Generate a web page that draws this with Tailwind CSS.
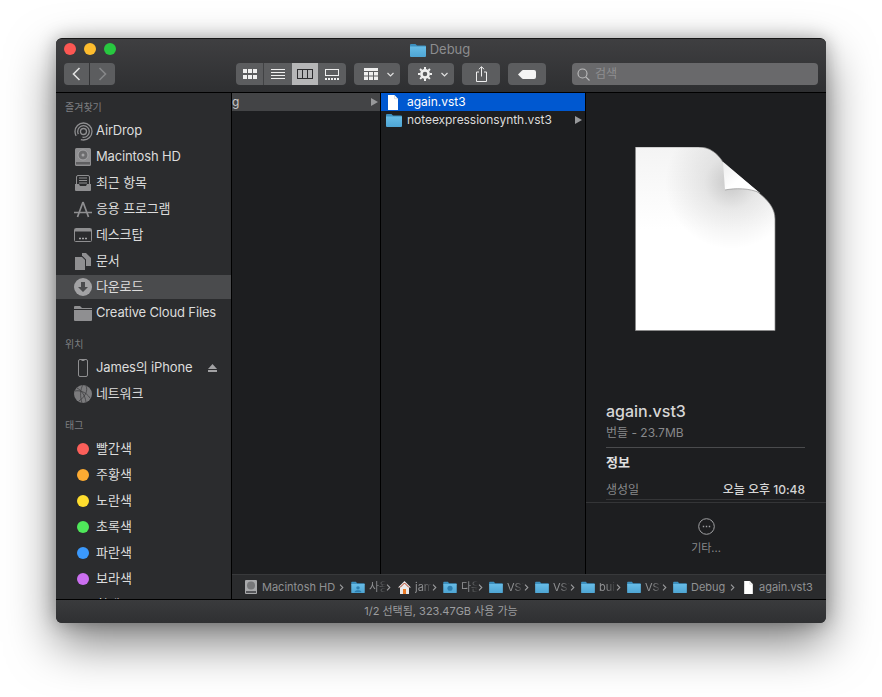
<!DOCTYPE html>
<html lang="ko">
  <head>
    <meta charset="UTF-8" />
    <title>Debug</title>
    <script src="https://cdn.jsdelivr.net/npm/@tailwindcss/browser@4"></script>
  </head>
  <body class="w-[882px] h-[697px] overflow-hidden bg-white font-['Inter','Noto_Sans_CJK_KR',sans-serif]">
    <!-- shared icons -->
    <svg class="absolute w-0 h-0">
      <defs>
        <linearGradient id="folderBody" x1="0" y1="0" x2="0" y2="1">
          <stop offset="0" stop-color="#67bce6" />
          <stop offset="1" stop-color="#4ea5d4" />
        </linearGradient>
        <linearGradient id="docShade" x1="0" y1="0" x2="0" y2="1">
          <stop offset="0" stop-color="#f4f4f4" />
          <stop offset="0.45" stop-color="#ffffff" />
        </linearGradient>
        <radialGradient id="foldShadow" gradientUnits="userSpaceOnUse" cx="96" cy="36" r="66">
          <stop offset="0" stop-color="#000000" stop-opacity="0.2" />
          <stop offset="0.4" stop-color="#000000" stop-opacity="0.08" />
          <stop offset="1" stop-color="#000000" stop-opacity="0" />
        </radialGradient>
        <linearGradient id="foldFace" x1="0" y1="0" x2="1" y2="1">
          <stop offset="0" stop-color="#ececec" />
          <stop offset="0.5" stop-color="#ffffff" />
        </linearGradient>
      </defs>
      <symbol id="folder" viewBox="0 0 16 14">
        <path d="M0 2a1 1 0 0 1 1-1h4.500l1.500 1.500h8a1 1 0 0 1 1 1V4H0z" fill="#3c8fbe" />
        <path d="M0 3.500h16V13a1 1 0 0 1-1 1H1a1 1 0 0 1-1-1z" fill="url(#folderBody)" />
      </symbol>
      <symbol id="doc" viewBox="0 0 12 15">
        <path d="M1 0h6.500L11 3.700V15H1z" fill="#fff" />
        <path d="M7.500 0v3.700H11" fill="none" stroke="#c9c9c9" stroke-width="0.600" />
      </symbol>
      <symbol id="chev" viewBox="0 0 6 10">
        <path d="M1.200 1.500 4.600 5 1.200 8.500" fill="none" stroke="#9a9b9d" stroke-width="1.300" />
      </symbol>
    </svg>

    <div class="ml-[56px] mt-[38px] w-[770px] h-[585px] rounded-[6px] overflow-hidden flex flex-col bg-[#2b2c2e] border-t border-[#161616] shadow-[0_20px_48px_rgba(0,0,0,0.5),0_0_18px_rgba(0,0,0,0.28)] text-[13px] text-[#dcdcdc]">
      <!-- title bar + toolbar -->
      <header class="h-[54px] shrink-0 bg-gradient-to-b from-[#3f3f41] to-[#2e2f31] border-b border-black">
        <div class="relative h-[23px]">
          <div class="flex gap-2 absolute left-2 top-[4px]">
            <span class="w-3 h-3 rounded-full bg-[#fc5753]"></span>
            <span class="w-3 h-3 rounded-full bg-[#fdbc2e]"></span>
            <span class="w-3 h-3 rounded-full bg-[#28c840]"></span>
          </div>
          <div class="flex items-center justify-center gap-[4px] h-full pr-[2px] pb-[2px] text-[#8c8d8f]">
            <svg class="w-4 h-[14px]"><use href="#folder" /></svg>
            <span>Debug</span>
          </div>
        </div>
        <div class="flex items-center h-[22px] mt-px pl-2">
          <button class="w-[25px] h-[22px] rounded-l-[4px] bg-[#5c5d5f] flex items-center justify-center">
            <svg width="9" height="14" viewBox="0 0 9 14"><path d="M7.500 1 1.500 7l6 6" fill="none" stroke="#e2e2e2" stroke-width="1.600" /></svg>
          </button>
          <button class="w-[25px] h-[22px] ml-px rounded-r-[4px] bg-[#5c5d5f] flex items-center justify-center">
            <svg width="9" height="14" viewBox="0 0 9 14"><path d="M1.500 1l6 6-6 6" fill="none" stroke="#868789" stroke-width="1.600" /></svg>
          </button>

          <div class="flex ml-[121px] rounded-[4px] overflow-hidden h-[22px] w-[110px] bg-[#5c5d5f]">
            <div class="w-[28px] flex items-center justify-center border-r border-[#414244]">
              <svg width="14" height="10" viewBox="0 0 14 10" fill="#f0f0f0"><rect width="4" height="4" /><rect x="5" width="4" height="4" /><rect x="10" width="4" height="4" /><rect y="6" width="4" height="4" /><rect x="5" y="6" width="4" height="4" /><rect x="10" y="6" width="4" height="4" /></svg>
            </div>
            <div class="w-[28px] flex items-center justify-center">
              <svg width="14" height="10" viewBox="0 0 14 10" fill="#f0f0f0"><rect width="14" height="1" /><rect y="3" width="14" height="1" /><rect y="6" width="14" height="1" /><rect y="9" width="14" height="1" /></svg>
            </div>
            <div class="w-[26px] flex items-center justify-center bg-[#b6b6b7]">
              <svg width="16" height="10" viewBox="0 0 16 10" fill="none" stroke="#2c2c2e"><rect x="0.500" y="0.500" width="15" height="9" /><path d="M5.500 0v10M10.500 0v10" /></svg>
            </div>
            <div class="w-[28px] flex items-center justify-center">
              <svg width="14" height="11" viewBox="0 0 14 11" fill="#f0f0f0"><path d="M0 0h14v7H0zm1 1v5h12V1z" /><rect x="1" y="1" width="12" height="5" fill="#5c5d5f" /><rect y="9" width="2" height="2" /><rect x="3" y="9" width="2" height="2" /><rect x="6" y="9" width="2" height="2" /><rect x="9" y="9" width="2" height="2" /><rect x="12" y="9" width="2" height="2" /></svg>
            </div>
          </div>

          <button class="w-[46px] h-[22px] ml-2 rounded-[4px] bg-[#5c5d5f] flex items-center pl-[10px] gap-[9px]">
            <svg width="14" height="12" viewBox="0 0 14 12" fill="#efefef"><rect width="14" height="3" /><rect y="4" width="4" height="3.500" /><rect x="5" y="4" width="4" height="3.500" /><rect x="10" y="4" width="4" height="3.500" /><rect y="8.500" width="4" height="3.500" /><rect x="5" y="8.500" width="4" height="3.500" /><rect x="10" y="8.500" width="4" height="3.500" /></svg>
            <svg width="7" height="5" viewBox="0 0 7 5"><path d="M.5 1l3 3 3-3" fill="none" stroke="#e0e0e0" stroke-width="1.200" /></svg>
          </button>
          <button class="w-[46px] h-[22px] ml-2 rounded-[4px] bg-[#5c5d5f] flex items-center pl-[10px] gap-[9px]">
            <svg width="14" height="14" viewBox="0 0 14 14"><circle cx="7" cy="7" r="3.600" fill="none" stroke="#efefef" stroke-width="2.600" /><path d="M7 0v14M0 7h14M2 2l10 10M12 2 2 12" stroke="#efefef" stroke-width="2" stroke-dasharray="2.400 9.200 2.400" /></svg>
            <svg width="7" height="5" viewBox="0 0 7 5"><path d="M.5 1l3 3 3-3" fill="none" stroke="#e0e0e0" stroke-width="1.200" /></svg>
          </button>
          <button class="w-[38px] h-[22px] ml-2 rounded-[4px] bg-[#5c5d5f] flex items-center justify-center">
            <svg width="11" height="16" viewBox="0 0 11 16" fill="none" stroke="#efefef"><path d="M3 6H.5v9.500h10V6H8" /><path d="M5.500 10.500V1M2.800 3.300 5.500.7l2.700 2.600" /></svg>
          </button>
          <button class="w-[38px] h-[22px] ml-2 rounded-[4px] bg-[#5c5d5f] flex items-center justify-center">
            <svg width="18" height="9" viewBox="0 0 18 9"><path d="M0 4.500 4 .5a1.500 1.500 0 0 1 1-.5h11a2 2 0 0 1 2 2v5a2 2 0 0 1-2 2H5a1.500 1.500 0 0 1-1-.5z" fill="#f4f4f4" /></svg>
          </button>

          <div class="flex items-center gap-[5px] ml-[26px] w-[246px] h-[22px] rounded-[4px] bg-[#69696b] pl-[5px]">
            <svg width="13" height="13" viewBox="0 0 13 13" fill="none" stroke="#bdbdbe" stroke-width="1.100"><circle cx="5.500" cy="5.500" r="4.500" /><path d="M8.800 8.800 12.500 12.500" /></svg>
            <span class="text-[#8f8f91] text-[12px]">검색</span>
          </div>
        </div>
      </header>

      <!-- body -->
      <div class="flex flex-1 min-h-0">
        <!-- sidebar -->
        <aside class="w-[176px] shrink-0 overflow-hidden bg-[#2b2c2e] border-r border-black">
          <h3 class="h-[25px] pl-[9px] pt-[9px] text-[10px] leading-[11px] text-[#7e7f81]">즐겨찾기</h3>
          <ul class="tracking-[-0.15px]">
            <li class="h-[26px] flex items-center">
              <span class="w-[40px] flex justify-center pl-[14px]">
                <svg width="19" height="19" viewBox="0 0 19 19" fill="none" stroke="#8f8f91" stroke-width="1.300"><circle cx="9.500" cy="9.500" r="8.500" stroke-dasharray="38 6" stroke-dashoffset="-22" /><circle cx="9.500" cy="9.500" r="5.800" stroke-dasharray="26 5" stroke-dashoffset="-15" /><circle cx="9.500" cy="9.500" r="3" /></svg>
              </span>AirDrop
            </li>
            <li class="h-[26px] flex items-center">
              <span class="w-[40px] flex justify-center pl-[14px]">
                <svg width="16" height="18" viewBox="0 0 16 18"><rect width="16" height="18" rx="1.500" fill="#8f8f91" /><circle cx="8" cy="7" r="5" fill="#6d6d6f" stroke="#a5a5a7" /><circle cx="8" cy="7" r="1.500" fill="#a5a5a7" /><rect x="1" y="14" width="14" height="2.500" fill="#5f5f61" /></svg>
              </span>Macintosh HD
            </li>
            <li class="h-[26px] flex items-center">
              <span class="w-[40px] flex justify-center pl-[14px]">
                <svg width="16" height="16" viewBox="0 0 16 16"><rect x="1.500" y="0.500" width="13" height="11" rx="1.500" fill="#2b2c2e" stroke="#8f8f91" /><path d="M4 3h8M4 5.500h8M4 8h8" stroke="#8f8f91" /><path d="M0 9h4l1 2h6l1-2h4v6a1 1 0 0 1-1 1H1a1 1 0 0 1-1-1z" fill="#8f8f91" /></svg>
              </span>최근 항목
            </li>
            <li class="h-[26px] flex items-center">
              <span class="w-[40px] flex justify-center pl-[14px]">
                <svg width="18" height="17" viewBox="0 0 18 17" fill="none" stroke="#8f8f91" stroke-width="1.700"><path d="M9 1 3.500 16M9 1l5.500 15M0 11.500h18" /></svg>
              </span>응용 프로그램
            </li>
            <li class="h-[26px] flex items-center">
              <span class="w-[40px] flex justify-center pl-[14px]">
                <svg width="18" height="14" viewBox="0 0 18 14"><rect x="0.500" y="0.500" width="17" height="13" rx="1" fill="#2b2c2e" stroke="#8f8f91" /><rect x="1" y="1" width="16" height="2.500" fill="#8f8f91" /><path d="M5 10.500h2M8 10.500h2M11 10.500h2" stroke="#a5a5a7" stroke-width="1.500" /></svg>
              </span>데스크탑
            </li>
            <li class="h-[26px] flex items-center">
              <span class="w-[40px] flex justify-center pl-[14px]">
                <svg width="16" height="17" viewBox="0 0 16 17" fill="#8f8f91"><path d="M0 4h7l3 3v10H0z" /><path d="M7 0h4l5 5v8h-5V6.500L7.500 3H7z" /></svg>
              </span>문서
            </li>
            <li class="h-[24px] my-px flex items-center bg-[#4a4b4d]">
              <span class="w-[40px] flex justify-center pl-[14px]">
                <svg width="18" height="18" viewBox="0 0 18 18"><circle cx="9" cy="9" r="9" fill="#a2a2a4" /><path d="M7 4h4v5h3l-5 5-5-5h3z" fill="#4a4b4d" /></svg>
              </span>다운로드
            </li>
            <li class="h-[26px] flex items-center">
              <span class="w-[40px] flex justify-center pl-[14px]">
                <svg width="18" height="15" viewBox="0 0 18 15" fill="#8f8f91"><path d="M0 1a1 1 0 0 1 1-1h5l2 2h10v1H0z" /><path d="M0 4h18v10a1 1 0 0 1-1 1H1a1 1 0 0 1-1-1z" /></svg>
              </span>Creative Cloud Files
            </li>
          </ul>

          <h3 class="h-[29px] pl-[9px] pt-[13px] text-[10px] leading-[11px] text-[#7e7f81]">위치</h3>
          <ul class="tracking-[-0.15px]">
            <li class="h-[26px] flex items-center">
              <span class="w-[40px] flex justify-center pl-[14px]">
                <svg width="10" height="18" viewBox="0 0 10 18"><rect x="0.500" y="0.500" width="9" height="17" rx="1.500" fill="none" stroke="#8f8f91" /><path d="M3.500 1.500h3" stroke="#8f8f91" /></svg>
              </span>James의 iPhone
              <svg class="ml-auto mr-[14px]" width="9" height="8" viewBox="0 0 9 8" fill="#a2a2a4"><path d="M4.500 0 9 5H0z" /><rect y="6" width="9" height="2" /></svg>
            </li>
            <li class="h-[26px] flex items-center">
              <span class="w-[40px] flex justify-center pl-[14px]">
                <svg width="18" height="18" viewBox="0 0 18 18"><circle cx="9" cy="9" r="9" fill="#7b7b7d" /><path d="M9 0c-3 4-3 12-1 18M12 1c2 4 0 10-7 15M1 6c5-1 11 1 15 7M3 3c4 2 8 7 9 14" fill="none" stroke="#3f3f41" stroke-width="0.800" /></svg>
              </span>네트워크
            </li>
          </ul>

          <h3 class="h-[29px] pl-[9px] pt-[13px] text-[10px] leading-[11px] text-[#7e7f81]">태그</h3>
          <ul>
            <li class="h-[26px] flex items-center"><span class="ml-[21px] mr-[7px] w-3 h-3 rounded-full bg-[#fc5f5a]"></span>빨간색</li>
            <li class="h-[26px] flex items-center"><span class="ml-[21px] mr-[7px] w-3 h-3 rounded-full bg-[#fdab32]"></span>주황색</li>
            <li class="h-[26px] flex items-center"><span class="ml-[21px] mr-[7px] w-3 h-3 rounded-full bg-[#fedd2e]"></span>노란색</li>
            <li class="h-[26px] flex items-center"><span class="ml-[21px] mr-[7px] w-3 h-3 rounded-full bg-[#4fe85a]"></span>초록색</li>
            <li class="h-[26px] flex items-center"><span class="ml-[21px] mr-[7px] w-3 h-3 rounded-full bg-[#3b99fc]"></span>파란색</li>
            <li class="h-[26px] flex items-center"><span class="ml-[21px] mr-[7px] w-3 h-3 rounded-full bg-[#cb6ff0]"></span>보라색</li>
            <li class="h-[26px] flex items-center"><span class="ml-[21px] mr-[7px] w-3 h-3 rounded-full bg-[#9a9a9c]"></span>회색</li>
          </ul>
        </aside>

        <!-- finder content -->
        <div class="flex-1 min-w-0 flex flex-col">
          <div class="flex flex-1 min-h-0 bg-[#1d1e20] text-[12px] leading-[18px]">
            <section class="w-[149px] shrink-0 border-r border-black">
              <div class="h-[18px] flex items-center justify-between bg-[#434446] pr-[2px]">
                <span class="text-[#c8c8c8]">g</span>
                <svg width="7" height="8" viewBox="0 0 7 8" fill="#98999b"><path d="M0 0l7 4-7 4z" /></svg>
              </div>
            </section>
            <section class="w-[205px] shrink-0 border-r border-black">
              <div class="h-[18px] flex items-center bg-[#0058d0] text-white">
                <svg class="w-3 h-[15px] ml-[6px] mr-2"><use href="#doc" /></svg>
                again.vst3
              </div>
              <div class="h-[18px] flex items-center pr-[3px] tracking-[-0.05px]">
                <svg class="w-4 h-[14px] ml-[5px] mr-[5px]"><use href="#folder" /></svg>
                noteexpressionsynth.vst3
                <svg class="ml-auto" width="7" height="8" viewBox="0 0 7 8" fill="#98999b"><path d="M0 0l7 4-7 4z" /></svg>
              </div>
            </section>
            <!-- preview -->
            <section class="flex-1 min-w-0 flex flex-col">
              <div class="flex-1 pl-5 pr-[21px]">
                <svg class="block mt-[54px] ml-[29px]" width="141" height="184" viewBox="0 0 141 184">
                  <path d="M0.500 0H63C75 0 82 6 88 15L124 46C134 54 140 62 140 72V183.500H0.500Z" fill="url(#docShade)" stroke="#8a8a8a" stroke-width="0.700" />
                  <path d="M0.500 0H63C75 0 82 6 88 15L124 46C134 54 140 62 140 72V183.500H0.500Z" fill="url(#foldShadow)" />
                  <path d="M88 15 90 43C100 41 115 41 125 46Z" fill="url(#foldFace)" />
                  <path d="M90 43C100 41 115 41 125 46" fill="none" stroke="#9a9a9a" stroke-width="0.800" />
                </svg>
                <div class="mt-[70px] text-[16px] leading-5 font-medium text-[#d6d6d6]">again.vst3</div>
                <div class="mt-[4px] text-[12px] leading-4 text-[#88898b]">번들 - 23.7MB</div>
                <div class="mt-[6px] border-t border-[#4a4b4d] pt-[5px] text-[13px] leading-[18px] font-semibold text-[#e0e0e0]">정보</div>
                <div class="mt-[10px] h-[19px] flex justify-between text-[12px] border-b border-[#343537]">
                  <span class="text-[#88898b]">생성일</span>
                  <span class="text-[#d6d6d6] font-medium">오늘 오후 10:48</span>
                </div>
              </div>
              <div class="h-[72px] shrink-0 border-t border-[#343537] flex flex-col items-center pt-[15px] text-[#88898b]">
                <svg width="17" height="17" viewBox="0 0 17 17" fill="none" stroke="#a0a1a3"><circle cx="8.500" cy="8.500" r="7.800" /><path d="M4.800 8.500h1.400M7.800 8.500h1.400M10.800 8.500h1.400" stroke-width="1.400" /></svg>
                <span class="mt-[6px] text-[11px] leading-[14px]">기타...</span>
              </div>
            </section>
          </div>

          <!-- path bar -->
          <nav class="h-[25px] shrink-0 flex items-center pl-[13px] bg-[#2a2b2d] border-t border-[#38393b] text-[11px] text-[#909193]">
            <svg class="shrink-0 mr-[5px]" width="12" height="14" viewBox="0 0 12 14"><rect width="12" height="14" rx="1" fill="#a8a9ab" /><circle cx="6" cy="5.500" r="4" fill="#77787a" /><rect x="1" y="11" width="10" height="2" fill="#55565a" /></svg>
            <span class="w-[74px] shrink-0 whitespace-nowrap">Macintosh HD</span>
            <svg class="w-[5px] h-[9px] shrink-0 ml-[3px] mr-[7px]"><use href="#chev" /></svg>
            <svg class="w-[14px] h-3 shrink-0 mr-1" viewBox="0 0 16 14"><use href="#folder" width="16" height="14" /><circle cx="8" cy="8" r="2" fill="#2d7fb0" /><path d="M4 13c0-3 8-3 8 0z" fill="#2d7fb0" /></svg>
            <span class="w-[17px] shrink-0 overflow-hidden whitespace-nowrap [mask-image:linear-gradient(90deg,#000_40%,transparent)]">사용자</span>
            <svg class="w-[5px] h-[9px] shrink-0 mr-[7px]"><use href="#chev" /></svg>
            <svg class="shrink-0 mr-1" width="13" height="13" viewBox="0 0 13 13"><path d="M6.500 0 13 6.500h-2V13H2V6.500H0z" fill="#e9e9e9" /><rect x="5" y="8" width="3" height="5" fill="#ea7a26" /><path d="M2 6.500 6.500 2 11 6.500" fill="none" stroke="#b23b20" /></svg>
            <span class="w-[17px] shrink-0 overflow-hidden whitespace-nowrap [mask-image:linear-gradient(90deg,#000_40%,transparent)]">james</span>
            <svg class="w-[5px] h-[9px] shrink-0 mr-[6px]"><use href="#chev" /></svg>
            <svg class="w-[14px] h-3 shrink-0 mr-1" viewBox="0 0 16 14"><use href="#folder" width="16" height="14" /><circle cx="8" cy="8.500" r="3" fill="#2d7fb0" /></svg>
            <span class="w-[17px] shrink-0 overflow-hidden whitespace-nowrap [mask-image:linear-gradient(90deg,#000_40%,transparent)]">다운로드</span>
            <svg class="w-[5px] h-[9px] shrink-0 mr-[6px]"><use href="#chev" /></svg>
            <svg class="w-[14px] h-3 shrink-0 mr-1"><use href="#folder" /></svg>
            <span class="w-[17px] shrink-0 overflow-hidden whitespace-nowrap [mask-image:linear-gradient(90deg,#000_40%,transparent)]">VST3_SDK</span>
            <svg class="w-[5px] h-[9px] shrink-0 mr-[6px]"><use href="#chev" /></svg>
            <svg class="w-[14px] h-3 shrink-0 mr-1"><use href="#folder" /></svg>
            <span class="w-[17px] shrink-0 overflow-hidden whitespace-nowrap [mask-image:linear-gradient(90deg,#000_40%,transparent)]">VST3_SDK</span>
            <svg class="w-[5px] h-[9px] shrink-0 mr-[6px]"><use href="#chev" /></svg>
            <svg class="w-[14px] h-3 shrink-0 mr-1"><use href="#folder" /></svg>
            <span class="w-[17px] shrink-0 overflow-hidden whitespace-nowrap [mask-image:linear-gradient(90deg,#000_40%,transparent)]">build</span>
            <svg class="w-[5px] h-[9px] shrink-0 mr-[6px]"><use href="#chev" /></svg>
            <svg class="w-[14px] h-3 shrink-0 mr-1"><use href="#folder" /></svg>
            <span class="w-[17px] shrink-0 overflow-hidden whitespace-nowrap [mask-image:linear-gradient(90deg,#000_40%,transparent)]">VST3</span>
            <svg class="w-[5px] h-[9px] shrink-0 mr-[6px]"><use href="#chev" /></svg>
            <svg class="w-[14px] h-3 shrink-0 mr-1"><use href="#folder" /></svg>
            <span class="w-[34px] shrink-0">Debug</span>
            <svg class="w-[5px] h-[9px] shrink-0 ml-[5px] mr-[8px]"><use href="#chev" /></svg>
            <svg class="w-[11px] h-[13px] shrink-0 mr-[5px]"><use href="#doc" /></svg>
            <span class="whitespace-nowrap">again.vst3</span>
          </nav>
        </div>
      </div>

      <!-- status bar -->
      <footer class="h-[24px] shrink-0 flex items-center justify-center bg-gradient-to-b from-[#3a3b3d] to-[#2f3032] border-t border-black text-[11px] text-[#9c9d9f]">1/2 선택됨, 323.47GB 사용 가능</footer>
    </div>
  </body>
</html>
